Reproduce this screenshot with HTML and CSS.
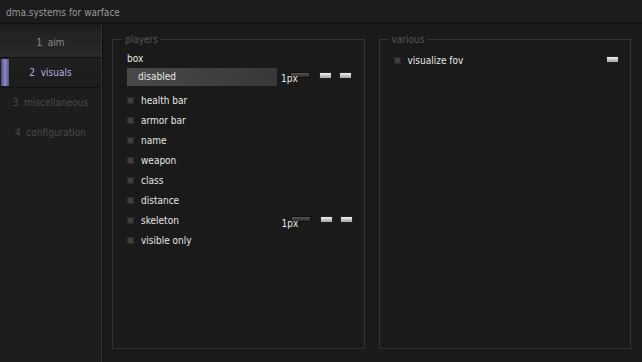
FILE: index.html
```html
<!DOCTYPE html>
<html>
<head>
    <title>dma.systems for warface</title>
    <link rel="stylesheet" href="styles.css">
</head>
<body>
<div class="titlebar">dma.systems for warface</div>
<div class="main">
    <div class="sidebar">
        <div class="tab">1&nbsp; aim</div>
        <div class="tab active">2&nbsp; visuals</div>
        <div class="tab dim">3&nbsp; miscellaneous</div>
        <div class="tab dim">4&nbsp; configuration</div>
    </div>
    <div class="content">
        <fieldset class="group">
            <legend>players</legend>
            <div class="label">box</div>
            <div class="row">
                <div class="dropdown">disabled</div>
                <span class="px">1px</span>
                <div class="slider"></div>
                <div class="swatch"></div>
                <div class="swatch"></div>
            </div>
            <div class="check"><span class="box"></span>health bar</div>
            <div class="check"><span class="box"></span>armor bar</div>
            <div class="check"><span class="box"></span>name</div>
            <div class="check"><span class="box"></span>weapon</div>
            <div class="check"><span class="box"></span>class</div>
            <div class="check"><span class="box"></span>distance</div>
            <div class="check"><span class="box"></span>skeleton
                <div class="extras">
                    <span class="px">1px</span>
                    <div class="slider"></div>
                    <div class="swatch"></div>
                    <div class="swatch"></div>
                </div>
            </div>
            <div class="check"><span class="box"></span>visible only</div>
        </fieldset>
        <fieldset class="group">
            <legend>various</legend>
            <div class="check first"><span class="box"></span>visualize fov
                <div class="extras"><div class="swatch"></div></div>
            </div>
        </fieldset>
    </div>
</div>
</body>
</html>
```

FILE: styles.css
```css
html, body {
    margin: 0;
    height: 100%;
}

body {
    background-color: #1a1a1a;
    color: #e6e6e6;
    font-family: "DejaVu Sans", Verdana, sans-serif;
    font-stretch: condensed;
    font-size: 10px;
    display: flex;
    flex-direction: column;
    overflow: hidden;
}

.titlebar {
    height: 21px;
    padding-top: 2px;
    line-height: 22px;
    padding-left: 6px;
    color: #9a9a9a;
    background-color: #1c1c1c;
    border-bottom: 1px solid #111;
}

.main {
    flex: 1;
    display: flex;
}

.sidebar {
    width: 101px;
    padding-top: 4px;
    background-color: #1d1d1d;
    border-right: 1px solid #333;
    box-shadow: 1px 0 0 #0e0e0e;
}

.tab {
    height: 29px;
    line-height: 29px;
    margin-bottom: 1px;
    text-align: center;
    color: #8a8a8a;
    background: linear-gradient(to bottom, #212121, #292929);
    box-shadow: 0 1px 0 #121212;
    position: relative;
}

.tab.active {
    color: #b4b0e0;
    background: linear-gradient(to bottom, #1f1f1f, #1c1c1c);
}

.tab.active::before {
    content: "";
    position: absolute;
    left: 1px;
    top: 1px;
    bottom: 1px;
    width: 8px;
    background: linear-gradient(to right, #4c4a7e, #8e8ac8 50%, #55527f);
}

.tab.dim {
    color: #4a4a4a;
    background: none;
    box-shadow: none;
}

.content {
    flex: 1;
    display: flex;
    gap: 14px;
    padding: 10px 11px 13px 10px;
}

.group {
    flex: 1;
    margin: 0;
    padding: 2px 11px 0 14px;
    border: 1px solid #333;
    min-width: 0;
}

.group legend {
    color: #555;
    padding: 0 3px;
    margin-left: -5px;
}

.label {
    height: 15px;
    line-height: 14px;
    margin-top: 5px;
}

.row {
    display: flex;
    align-items: center;
    height: 20px;
    margin-bottom: 3px;
}

.dropdown {
    flex: none;
    width: 139px;
    height: 18px;
    line-height: 18px;
    padding-left: 11px;
    background: linear-gradient(to right, #494949, #383838);
}

.px {
    flex: none;
    margin-left: 4px;
    margin-top: 3px;
    width: 9px;
    position: relative;
    z-index: 1;
}

.slider {
    flex: none;
    width: 18px;
    height: 4px;
    margin-top: -5px;
    background: linear-gradient(to bottom, #555, #2a2a2a);
    border: 1px solid #111;
}

.swatch {
    flex: none;
    width: 11px;
    height: 5px;
    margin-left: 9px;
    margin-top: -4px;
    background: linear-gradient(to bottom, #f2f2f2, #a0a0a0);
    border: 1px solid #222;
}

.swatch + .swatch {
    margin-left: 7px;
}

.check {
    display: flex;
    align-items: center;
    height: 20px;
}

.check.first {
    margin-top: 3px;
}

.box {
    flex: none;
    width: 5px;
    height: 5px;
    background-color: #3e3e3e;
    border: 1px solid #2a2a2a;
    margin-right: 7px;
}

.extras {
    margin-left: auto;
    display: flex;
    align-items: center;
    margin-top: 3px;
}
```
